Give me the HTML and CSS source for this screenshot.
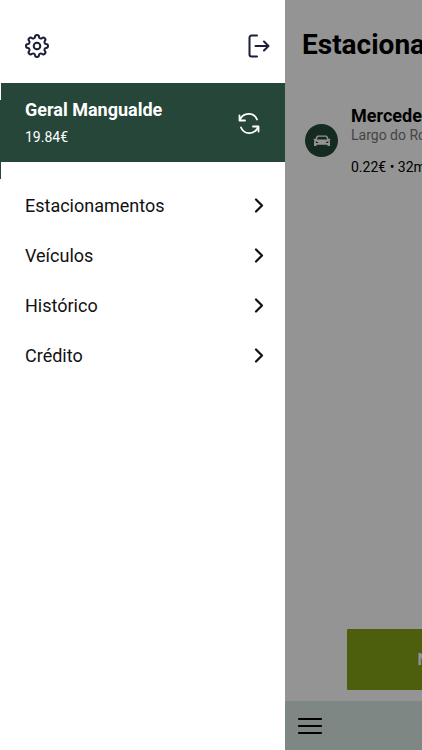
FILE: index.html
```html
<!DOCTYPE html>
<html lang="pt">
<head>
  <meta charset="UTF-8" />
  <title>Estacionamentos</title>
  <meta name="viewport" content="width=device-width, initial-scale=1.0" />
  <link rel="stylesheet" href="styles.css">
</head>
<body>
  <div class="app">
    <!-- Menu lateral -->
    <aside class="drawer">
      <div class="drawer-top">
        <button class="icon-btn" type="button" aria-label="Definições">
          <svg width="26" height="26" viewBox="-13 -13 26 26" fill="none" stroke="#1b1d3a" stroke-width="2" stroke-linejoin="round">
            <path d="M-2-9A2 2 0 0 1 2-9A1.9 1.9 0 0 0 4.95-7.78A2 2 0 0 1 7.78-4.95A1.9 1.9 0 0 0 9-2A2 2 0 0 1 9 2A1.9 1.9 0 0 0 7.78 4.95A2 2 0 0 1 4.95 7.78A1.9 1.9 0 0 0 2 9A2 2 0 0 1-2 9A1.9 1.9 0 0 0-4.95 7.78A2 2 0 0 1-7.78 4.95A1.9 1.9 0 0 0-9 2A2 2 0 0 1-9-2A1.9 1.9 0 0 0-7.78-4.95A2 2 0 0 1-4.95-7.78A1.9 1.9 0 0 0-2-9Z" />
            <circle r="3.3" />
          </svg>
        </button>
        <button class="icon-btn" type="button" aria-label="Sair">
          <svg width="22" height="24" viewBox="0 0 22 24" fill="none" stroke="#1b1d3a" stroke-width="2" stroke-linecap="round" stroke-linejoin="round">
            <path d="M9 1.5H3.5A2 2 0 0 0 1.500 3.500V20.500A2 2 0 0 0 3.500 22.500H9M7.500 12H20.500M16 7.500L20.500 12L16 16.500" />
          </svg>
        </button>
      </div>

      <div class="account">
        <div>
          <div class="account-name">Geral Mangualde</div>
          <div class="account-balance">19.84€</div>
        </div>
        <button class="icon-btn" type="button" aria-label="Atualizar">
          <svg width="22" height="22" viewBox="0 0 22 22" fill="none" stroke="#fff" stroke-width="1.8" stroke-linecap="round" stroke-linejoin="round">
            <path d="M1.500 2.500V7.500H7M1.800 7.300C5-1 16-1 19 6.500" />
            <path d="M20.500 18.500V13.500H15M20.200 13.700C17 22 6 22 3 14.500" />
          </svg>
        </button>
      </div>

      <nav class="menu">
        <a class="menu-item" href="#">Estacionamentos
          <svg class="chevron" viewBox="0 0 10 16"><path d="M2 2.500L8 8.500L2 14.500" /></svg>
        </a>
        <a class="menu-item" href="#">Veículos
          <svg class="chevron" viewBox="0 0 10 16"><path d="M2 2.500L8 8.500L2 14.500" /></svg>
        </a>
        <a class="menu-item" href="#">Histórico
          <svg class="chevron" viewBox="0 0 10 16"><path d="M2 2.500L8 8.500L2 14.500" /></svg>
        </a>
        <a class="menu-item" href="#">Crédito
          <svg class="chevron" viewBox="0 0 10 16"><path d="M2 2.500L8 8.500L2 14.500" /></svg>
        </a>
      </nav>
    </aside>

    <!-- Página por trás do menu -->
    <div class="page">
      <main class="content">
        <h1>Estacionamentos</h1>
        <div class="parking">
          <div class="parking-icon">
            <svg width="18" height="14" viewBox="0 0 18 14">
              <path fill="#fff" fill-rule="evenodd" d="M4.800 1.500H13.200Q14 1.500 14.400 2.300L15.700 5.100L17.300 4.700V6L16.400 6.500Q17 7.100 17 8V12H14.500V10.800H3.500V12H1V8Q1 7.100 1.600 6.500L.7 6V4.700L2.300 5.100L3.600 2.300Q4 1.500 4.800 1.500ZM5 2.700L3.700 5.600H14.300L13 2.700ZM2.700 7.500V8.900H5.400L4.500 7.700ZM15.300 7.500V8.900H12.600L13.500 7.700Z" />
            </svg>
          </div>
          <div>
            <div class="parking-name">Mercedes</div>
            <div class="parking-place">Largo do Rossio</div>
            <div class="parking-cost">0.22€ • 32m</div>
          </div>
        </div>
        <button class="new-btn" type="button">Novo estacionamento</button>
      </main>
      <footer class="bottom-bar">
        <button class="icon-btn" type="button" aria-label="Menu">
          <svg width="26" height="18" viewBox="0 0 26 18" stroke="#000" stroke-width="2.200" stroke-linecap="round">
            <path d="M2 2H24M2 9H24M2 16H24" />
          </svg>
        </button>
      </footer>
      <div class="overlay"></div>
    </div>
  </div>
</body>
</html>
```
FILE: styles.css
```css
* {
  box-sizing: border-box;
}

body {
  margin: 0;
  font-family: Roboto, "Liberation Sans", sans-serif;
  background-color: #fff;
  color: #111;
}

.app {
  display: flex;
  min-height: 100vh;
  overflow: hidden;
}

.icon-btn {
  display: flex;
  padding: 0;
  border: none;
  background: none;
  cursor: pointer;
}

/* Menu lateral */
.drawer {
  flex: 0 0 285px;
  background-color: #fff;
}

.drawer-top {
  display: flex;
  justify-content: space-between;
  align-items: center;
  padding: 33px 15px 24px 24px;
}

.account {
  position: relative;
  display: flex;
  justify-content: space-between;
  align-items: center;
  margin-left: 1px;
  padding: 16px 25px 14px 24px;
  background-color: #264639;
  color: #fff;
}

.account::before {
  content: "";
  position: absolute;
  top: 17px;
  bottom: -17px;
  left: -1px;
  width: 1px;
  background-color: #264639;
}

.account-name {
  font-size: 18px;
  font-weight: bold;
  line-height: 22px;
}

.account-balance {
  margin-top: 6px;
  font-size: 14px;
  line-height: 21px;
}

.menu {
  padding-top: 18px;
}

.menu-item {
  display: flex;
  justify-content: space-between;
  align-items: center;
  height: 50px;
  padding: 0 21px 0 25px;
  color: #111;
  font-size: 18px;
  text-decoration: none;
}

.chevron {
  width: 10px;
  height: 16px;
  fill: none;
  stroke: #111;
  stroke-width: 2.2;
  stroke-linecap: round;
  stroke-linejoin: round;
}

/* Página */
.page {
  position: relative;
  flex: 0 0 100%;
  display: flex;
  flex-direction: column;
}

.overlay {
  position: absolute;
  inset: 0;
  background-color: rgba(0, 0, 0, 0.42);
}

.content {
  flex: 1;
  display: flex;
  flex-direction: column;
  padding: 27px 17px 11px;
}

h1 {
  margin: 0;
  color: #000;
  font-size: 28px;
  line-height: 36px;
}

.parking {
  display: flex;
  align-items: center;
  gap: 13px;
  margin-top: 42px;
  padding-left: 3px;
}

.parking-icon {
  display: flex;
  justify-content: center;
  align-items: center;
  width: 33px;
  height: 33px;
  border-radius: 50%;
  background-color: #254a37;
}

.parking-name {
  color: #000;
  font-size: 18px;
  font-weight: bold;
  line-height: 22px;
}

.parking-place {
  color: #777;
  font-size: 14px;
  line-height: 17px;
}

.parking-cost {
  margin-top: 14px;
  color: #000;
  font-size: 14px;
  line-height: 18px;
}

.new-btn {
  align-self: center;
  width: 298px;
  height: 61px;
  margin-top: auto;
  border: none;
  border-radius: 1px;
  background-color: #85a215;
  color: #fff;
  font-family: inherit;
  font-size: 16px;
  font-weight: bold;
}

.bottom-bar {
  display: flex;
  align-items: center;
  height: 49px;
  padding-left: 12px;
  background-color: #d9e9e2;
}
```
